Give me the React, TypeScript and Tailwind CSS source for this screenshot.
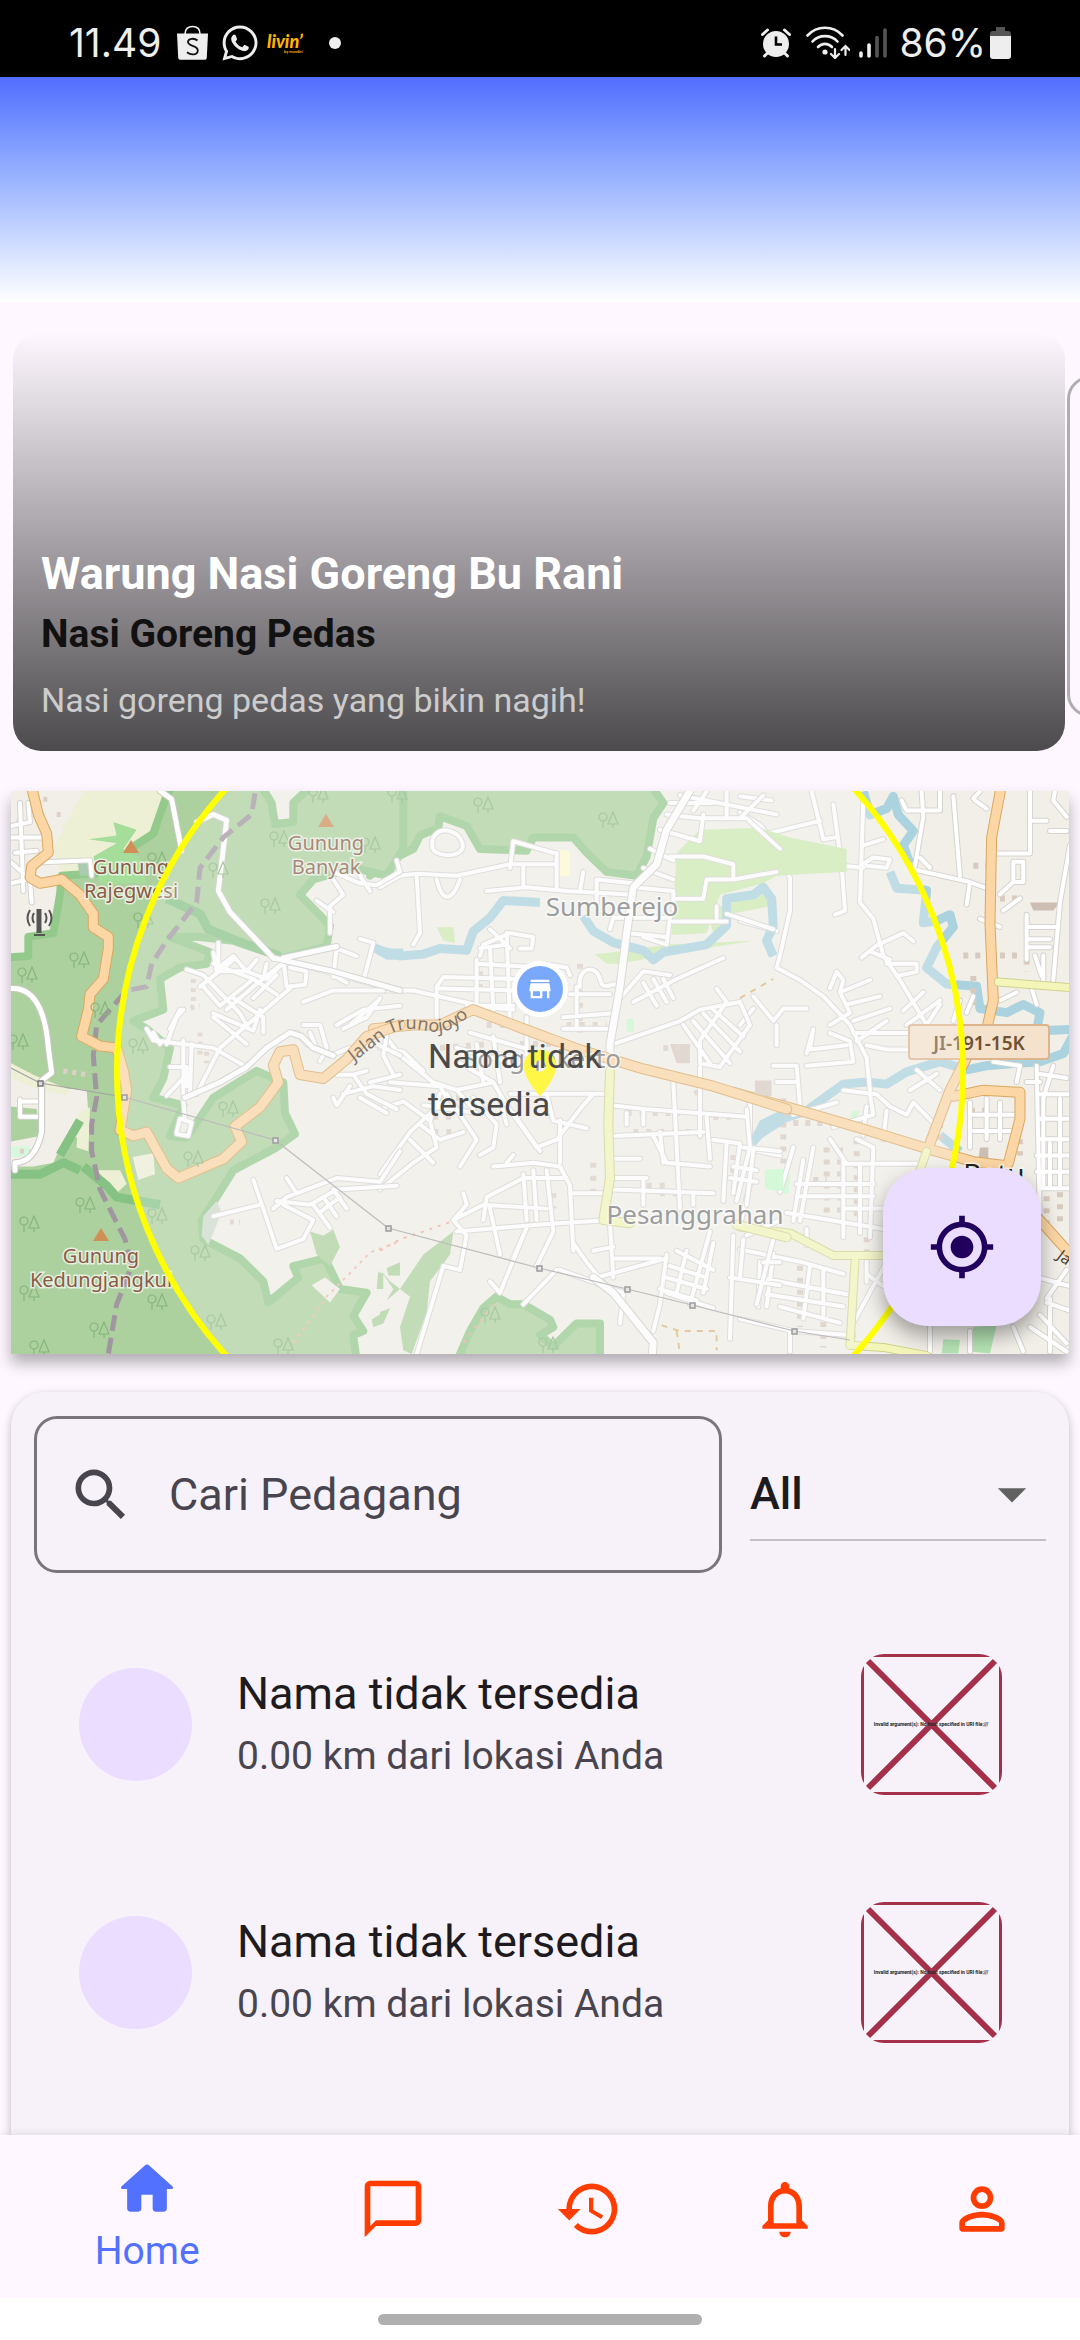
import type { ReactNode } from "react";
import {
  MdArrowDropDown,
  MdChatBubbleOutline,
  MdHistory,
  MdLocationOn,
  MdMyLocation,
  MdNotificationsNone,
  MdSearch,
  MdStore,
} from "react-icons/md";
import { FaWhatsapp } from "react-icons/fa";

/* ---------- Status bar ---------- */

function ShopIcon() {
  return (
    <svg viewBox="0 0 31 35" className="h-[35px] w-[31px]" aria-hidden="true">
      <path d="M8 9C8 4 11 1.500 15.500 1.500S23 4 23 9" fill="none" stroke="#eeeeee" strokeWidth="1.600" />
      <path d="M0 8.500h31l-1.200 24c-.1 1.500-1 2.300-2.400 2.300H3.600c-1.400 0-2.300-.8-2.400-2.300z" fill="#eeeeee" />
      <path
        d="M20.500 15.500c-3-2.600-9.500-2.400-9.500 1.500 0 4.600 9.800 3 9.800 8.400 0 4.600-6.800 5.200-10.800 1.800"
        fill="none"
        stroke="#111"
        strokeWidth="1.800"
      />
    </svg>
  );
}

function LivinIcon() {
  return (
    <svg viewBox="0 0 40 24" className="h-6 w-10" fill="#ffb400" aria-hidden="true">
      <text x="0" y="17" fontFamily="Lato, sans-serif" fontStyle="italic" fontWeight="900" fontSize="18">
        livin’
      </text>
      <text x="17" y="22" fontFamily="Lato, sans-serif" fontWeight="700" fontSize="4">
        by mandiri
      </text>
    </svg>
  );
}

function AlarmIcon() {
  return (
    <svg viewBox="0 0 30 30" className="size-[30px]" aria-hidden="true">
      <circle cx="15" cy="16" r="13" fill="#eeeeee" />
      <path d="M1.500 6.500 6.500 2M28.500 6.500 23.500 2M3.500 28l4-4M26.500 28l-4-4" stroke="#eeeeee" strokeWidth="3" strokeLinecap="round" />
      <path d="M15 8.500v8h6" fill="none" stroke="#000" strokeWidth="2.600" />
    </svg>
  );
}

function WifiIcon() {
  return (
    <svg viewBox="0 0 44 33" className="h-[33px] w-11" fill="none" stroke="#eeeeee" strokeWidth="2.600" strokeLinecap="round" aria-hidden="true">
      <path d="M1.500 9.500C11-.8 27-.8 36.500 9.500" />
      <path d="M6.500 15.500C13 8.300 25 8.300 31.500 15.500" />
      <path d="M12 21c4-4.200 10-4.200 14 0" />
      <circle cx="19" cy="26" r="1.300" fill="#eeeeee" />
      <path d="M29 23v9m-4-4 4 4 4-4" strokeWidth="2.200" />
      <path d="M39.500 29v-9m-4 4 4-4 4 4" strokeWidth="2.200" />
    </svg>
  );
}

function SignalIcon() {
  return (
    <svg viewBox="0 0 28 30" className="h-[30px] w-7" strokeWidth="3.600" strokeLinecap="round" aria-hidden="true">
      <path d="M2 25v3M10 17v11" stroke="#eeeeee" />
      <path d="M18 9.500V28M26 2v26" stroke="#555" />
    </svg>
  );
}

function BatteryIcon() {
  return (
    <svg viewBox="0 0 21 32" className="h-8 w-[21px]" aria-hidden="true">
      <path d="M6 0h9v4h3c2 0 3 1 3 3v3H0V7c0-2 1-3 3-3h3z" fill="#555" />
      <path d="M0 9h21v20c0 2-1 3-3 3H3c-2 0-3-1-3-3z" fill="#eeeeee" />
    </svg>
  );
}

function StatusBar() {
  return (
    <div className="flex h-[77px] items-center justify-between bg-black pt-2 pr-[69px] pl-[69px] font-[Inter,sans-serif] text-[39px] leading-none text-[#eeeeee]">
      <div className="flex items-center">
        <span>11.49</span>
        <div className="ml-4 flex items-center gap-3">
          <ShopIcon />
          <FaWhatsapp className="size-10" />
        </div>
        <div className="ml-[7px]">
          <LivinIcon />
        </div>
        <span className="ml-[22px] size-3 rounded-full bg-[#eeeeee]" />
      </div>
      <div className="flex items-center">
        <AlarmIcon />
        <div className="ml-[15px]">
          <WifiIcon />
        </div>
        <div className="ml-[9px]">
          <SignalIcon />
        </div>
        <span className="mr-1 ml-3">86%</span>
        <BatteryIcon />
      </div>
    </div>
  );
}

/* ---------- Promotions ---------- */

function PromoCarousel() {
  return (
    <section className="flex gap-[2px] overflow-hidden pt-[30px] pl-[13px]">
      <article className="flex min-h-[419px] w-[calc(100%-15px)] shrink-0 flex-col justify-end rounded-[28px] bg-linear-to-b from-transparent to-black/70 px-7 pb-[27px] font-[Roboto,sans-serif]">
        <h2 className="text-[45px] leading-[64px] font-bold text-white">Warung Nasi Goreng Bu Rani</h2>
        <h3 className="text-[39px] leading-[56px] font-bold text-[#111111]">Nasi Goreng Pedas</h3>
        <p className="mt-[14px] text-[34px] leading-[48px] text-[#cccccc]">Nasi goreng pedas yang bikin nagih!</p>
      </article>
      <article className="mt-11 mb-[34px] w-[calc(100%-28px)] shrink-0 rounded-[23px] border-[3px] border-[#b0adb1]" />
    </section>
  );
}

/* ---------- Map ---------- */

type RoadProps = { lines: string[]; width: number; fill: string; casing: string };

function Roads({ lines, width, fill, casing }: RoadProps) {
  const shared = { vectorEffect: "non-scaling-stroke", fill: "none", strokeLinejoin: "round", strokeLinecap: "round" } as const;
  return (
    <>
      {lines.map((d) => (
        <path key={d} d={d} stroke={casing} strokeWidth={width + 2} {...shared} />
      ))}
      {lines.map((d) => (
        <path key={d} d={d} stroke={fill} strokeWidth={width} {...shared} />
      ))}
    </>
  );
}

function Line({ d, stroke, width, dash }: { d: string; stroke: string; width: number; dash?: string }) {
  return (
    <path d={d} fill="none" stroke={stroke} strokeWidth={width} strokeDasharray={dash} strokeLinejoin="round" vectorEffect="non-scaling-stroke" />
  );
}

function Wood({ d }: { d: string }) {
  return <path d={d} fill="#add19e" stroke="#94c98c" strokeWidth="8" strokeLinejoin="round" vectorEffect="non-scaling-stroke" />;
}

const MINOR = { width: 4, fill: "#ffffff", casing: "#d6d4d1" };
const MAIN = { width: 9, fill: "#fcd6a4", casing: "#d9a860" };

const trees = [
  [279, 839], [218, 870], [270, 906], [143, 920], [79, 960], [27, 975], [138, 1046], [18, 1042], [228, 1109], [85, 1205],
  [29, 1224], [157, 1216], [200, 1253], [29, 1293], [157, 1302], [99, 1330], [216, 1322], [283, 1346], [39, 1348],
  [193, 1159], [157, 860], [397, 795], [483, 805], [608, 820], [370, 845], [548, 1345], [318, 795], [490, 1315], [100, 1010],
];

const peaks = [[131, 846], [326, 820], [101, 1234]];
const pylons = [[40, 1083], [124, 1097], [275, 1140], [388, 1228], [539, 1268], [627, 1289], [692, 1305], [794, 1331]];

function WestTile() {
  return (
    <g transform="translate(0 780) scale(.3333 .3827)">
      <path d="M170 28H510L460 150 390 190 260 250 185 250 160 180 190 130Z" fill="#eef0d5" />
      <path d="M110 28H250L200 110 150 130Z" fill="#f2efe9" />
      <Wood d="M500 40 460 140 390 180 360 240 185 250 180 300 160 400 85 410 85 460 0 465 0 1520H1070L1060 1450 1090 1440 1060 1400 1100 1340 1020 1330 975 1250 880 1270 895 1300 805 1365 790 1310 720 1250 610 1200 605 1150 650 1090 700 1020 830 960 885 925 855 870 850 790 770 760 640 830 560 935 510 930 550 850 460 830 490 780 510 700 440 650 400 630 490 600 480 520 540 490 620 480 630 450 510 410 600 410 700 420 850 465 980 435 990 380 900 300 940 260 1060 230 1160 250 1210 180V10H940L880 60 880 110 825 115 815 60 780 10H520Z" />
      <path d="M265 155 350 145 340 110 410 130 370 180 415 200 440 270 300 270 280 200 350 165Z" fill="#a5dd9b" />
      <path d="M232 215 275 205 272 250 240 250Z" fill="#aacbaf" />
      <path d="M0 745 90 765 100 800 260 810 265 870 235 930 180 960 160 1000 100 1010 0 1010Z" fill="#f2efe9" />
      <path d="M0 725 100 770 210 810 200 825 90 800 0 765Z" fill="#eef0d5" />
      <path d="M0 850 110 860 120 930 0 950Z" fill="#add19e" />
      <path d="M0 960 85 955 88 985 0 985Z" fill="#d6f8dc" />
      <path d="M235 870 270 855 265 970 230 960Z" fill="#eef0d5" />
      <path d="M290 1020 360 1020 380 1055 350 1080Z M398 985 460 975 465 1030 415 1045Z" fill="#eef0d5" />
      <path d="M935 1320 975 1300 1020 1330 990 1365Z" fill="#f2efe9" />
      <path d="M930 1180 970 1190 1000 1175 1020 1220 990 1270 950 1240Z M1135 1285 1150 1290 1150 1330 1130 1330Z M1115 1410 1170 1380 1150 1420 1120 1430Z M1160 1275 1200 1260V1295H1165Z" fill="#add19e" />
      <path d="M610 1140 650 1100 665 1130 625 1215 605 1190Z" fill="#cfdccb" />
      <Line d="M180 980 240 890M250 1010 320 1060 350 1090 480 1110M500 310 600 350 625 390 740 430 840 460M33 1030 120 1030 190 1000 240 1020" stroke="#86c284" width={9} />
      <Line d="M130 50h18M170 90h24M50 110h26M190 760 260 770M580 520v60M600 660v70M545 600 600 590M620 710v30M690 1155h30M60 970h30" stroke="#ddd0c6" width={5} dash="4 5" />
      <path d="M1112 420 1160 440H1210V470H1160L1120 450Z" fill="#aad3df" />
      <Roads
        {...MINOR}
        lines={[
          "M33 120 90 110 85 60M33 150H130M45 190 110 185M33 215 90 260 95 320M33 270 80 260M60 60 70 290M130 215 270 210 275 250",
          "M560 495 610 510 720 610 740 640M600 540 700 470M640 480 760 520 830 560M640 450 650 500 730 500M655 425V490L700 460 740 500 800 520 860 470M680 600 760 540 860 470",
          "M640 610 760 655 780 600M740 690 640 620M440 650 460 680 640 700 740 750M460 660 480 690M540 600 510 650M500 690 530 620 550 600M550 680V820M510 750H560L560 800M500 825 560 770M575 690 570 820",
          "M700 570 790 620V660M800 480 790 520M850 470 860 540 915 535 920 500 870 490M830 510 760 570M770 470 740 500M610 540 660 590 760 520M590 820 660 700 870 545",
          "M1000 515 1010 440 1070 460M1120 425 1090 525M1080 415 1120 425M890 480 1190 550M1000 510 1040 530M910 580 1000 550H1150M1010 640 1090 600 1200 590M1030 650 1100 620 1140 570M1050 640 1130 580",
          "M1000 240 1080 270 1130 275 1200 240M1000 260 1030 300 990 330 990 400M950 315 1000 345M1080 250 1110 290M1190 210 1200 240",
          "M890 660 920 690 990 720 1050 700M910 640 960 640 980 700M960 735 980 700M930 660 945 690",
          "M1010 770 1060 770 1100 820 1190 860M1050 800 1010 850 1000 830M1030 820 1120 800 1200 810M1060 770 1100 760M1130 690 1200 720M1160 670 1150 720 1180 770M1080 830 1160 870M1200 770 1110 790",
          "M820 1120 860 1090 1010 1040 1140 1050 1200 970M830 1100 930 1110 1010 1070 1190 1060M940 1110 990 1170M970 1090 1010 1140M1000 1070 1040 1120M1020 1090 960 1130M850 1110 940 1150 910 1200 830 1225 790 1120 760 1045M860 1040 890 1080M640 1140 780 1110",
          "M550 835 555 890M530 920 540 885 575 895 565 930 530 925M60 840H125M60 880H120M60 835 60 880",
        ]}
      />
      <Roads
        lines={["M480 28 515 50 545 185", "M590 110 640 90 680 105 670 180 655 290 690 345 820 465", "M33 545C120 540 140 640 145 700L155 765 125 785 125 920C110 980 80 1000 45 1000V1020", "M555 830 660 790 740 750 800 700 870 660 905 670 940 700 1000 720", "M820 465 1000 500 1200 550M850 465 1010 435"]}
        width={5}
        fill="#ffffff"
        casing="#c9c8c4"
      />
      <Line d="M765 35 755 90 670 150 600 230 590 320 500 420 455 480 440 540 380 550 290 640 280 720 290 830 275 900 275 970 300 1070 375 1200 395 1270 350 1370 325 1500" stroke="#a096a0" width={5} dash="16 7" />
      <Roads {...MAIN} lines={["M95 20 115 90 140 140 145 190 95 225 90 255 120 270 185 260 240 300 280 350 280 385 325 410 325 440 310 520 270 560 265 600 245 670 300 695 350 700 370 760 380 810 360 915 400 930 440 920 500 1015 535 1040 670 990 725 945 705 905 780 855 835 790 820 745 840 710 880 705 900 770 970 780 1040 730 1100 670 1200 640"]} />
      <Line d="M880 1470 940 1400 980 1350 1060 1280 1110 1235 1200 1205" stroke="#f3b8a8" width={2} dash="3 5" />
    </g>
  );
}

function CentralTile() {
  return (
    <g transform="translate(380 780) scale(.3333 .3827)">
      <path d="M890 190 960 130 1140 125 1230 150 1400 180V240L1190 250 1150 270 1020 300 980 400 875 405Z" fill="#cdebb0" />
      <path d="M980 340 1060 320 1150 290 1170 330 1050 350 1000 400Z" fill="#cdebb0" />
      <path d="M645 455 700 450 870 430 1120 420 900 450 720 480 680 480Z M170 385 220 385 225 425 190 420Z" fill="#cdebb0" />
      <Wood d="M-30 250 20 215 100 180 120 145 175 125 180 95 260 120 300 180 440 185 460 150 580 150 620 190 680 240 770 250 800 200 820 100 850 60 810 10H-30Z" />
      <Wood d="M230 1520 270 1440 310 1380 350 1350 390 1370 430 1370 510 1410 520 1430 480 1450 520 1480 590 1420 660 1420V1520Z" />
      <path d="M0 1280 40 1330 20 1360 60 1330 130 1240 220 1180 210 1240 150 1310 140 1390 95 1500 70 1490 60 1430 90 1350 30 1310ZM0 1390 30 1380 0 1425Z" fill="#add19e" />
      <path d="M525 180 570 185V250H535Z" fill="#fffccf" />
      <path d="M1155 1020 1210 1015V1075L1155 1060ZM740 625h22v32h-22Z" fill="#c8facc" />
      <path d="M1125 785h50v40h-50ZM870 690h60v50h-40Z" fill="#d9ccc3" />
      <Line d="M0 445 60 460 130 455 180 440 260 445 280 395 330 360 370 315 480 320M610 355 640 395 700 425 790 445 820 470 850 450 980 430 1040 380 1040 310 1120 300 1150 280 1175 310 1180 380 1160 420 1180 460" stroke="#aad3df" width={9} />
      <path d="M1110 940 1140 890 1210 860V900L1110 955Z" fill="#aad3df" />
      <Line d="M300 500V560M320 640H400M420 690H560M150 830H260M120 880H260M160 920H240M600 480V660M740 870H900M760 920H950M800 1060H860M640 1000V1100M560 640H680M850 700H920M930 780 960 830M180 700 330 690M840 1080H900M1000 880H1080M1060 980V1040M520 1080V1120" stroke="#dccfc5" width={6} dash="5 8" />
      <Roads
        {...MINOR}
        lines={[
          "M0 280 60 250 110 245 230 250 390 220 530 220M110 250 120 400 100 430M45 200 55 250M320 290 440 280 560 290 760 300M390 230 400 160 480 180 520 190M430 220V280M530 190V280M610 240 600 290M650 260V320M650 260 760 270M160 150C180 120 230 130 245 160S220 200 190 195 150 180 160 150M170 260C190 330 220 310 240 260",
          "M810 180 880 210M790 230 880 260M840 130 960 160 970 90M860 90 960 100 1100 100 1200 180M870 200 970 200 1060 220 1060 250M760 280 880 290 880 340M890 310 970 310 980 260 1060 260 1190 240M870 60 1000 60M900 40 1190 90M940 80 980 30M1040 30V95M1080 100 1150 40",
          "M870 360 860 430 790 410M690 390 700 360H860M740 400 860 410M880 370 1040 370M1040 350 1180 390M1010 330V360",
          "M0 550 100 550 300 590 400 590M170 540V620M170 540 190 515 430 520M180 545 430 550M300 460 310 430 390 400 460 410 455 440 420 440M290 480 480 490M290 470V600M330 440 340 600M380 400 390 640M330 390 390 440M300 440 380 430M260 590 400 600",
          "M570 560 690 560M590 540V650M550 620 690 610M550 650H680M490 480 560 490 570 510M600 540C590 490 650 480 660 520S700 520 720 540M720 570 790 500 870 510M760 580 890 520 1030 465M790 530 830 590M820 520 860 580M850 520 880 570M700 690 900 630 960 600 1080 580 1110 640 1020 750 960 740 960 680 1040 580M910 640 990 740M940 630 1050 740M970 610 1080 710M1000 600 1090 670M1010 545 1040 580",
          "M0 650 60 720 160 790 230 810 340 790M0 700 70 710 130 760M30 790 180 800 200 830 90 920 0 1030M0 860 70 840 150 890 170 960 100 1000 0 1070M120 900 180 940 250 920M90 940 160 1000M180 820 150 890M200 820 290 940 240 1010M230 810 280 860M130 850 290 870M280 830 350 900 340 960 300 980",
          "M340 670 360 790M270 660 430 700M230 700 400 740M440 620V720M290 690 310 790M240 740 340 790 380 850 470 960 530 940 600 860 640 820M390 820 680 820M400 870 480 970M360 830 380 900M500 820 520 890 620 910",
          "M340 1010 460 1000 540 1010 570 1060 580 1230M540 890V1000M460 1020 470 1150M380 1000 400 980M310 1150 320 1090 430 1040 560 1040M430 1030 440 1150M230 1180 500 1160 690 1150M220 1150 310 1110 500 1120M250 1080 260 1110 220 1150 260 1190 240 1280M330 1120 360 1240M500 1020 520 1180 470 1270M570 1080 690 1080M400 1250 440 1170",
          "M690 850 800 860 1100 880M700 930 970 920M740 870V900M790 860V900M700 990H780M700 1040H800M700 1070 1000 1080M880 790 900 1120M960 750V930M1100 860 1110 960 1070 1100M820 930 860 1000 990 1010M840 920 850 1000M980 880 990 990M790 1040V1110M1000 940 1080 950 1060 1080M1040 950 1030 1100M1090 960 1200 970M1120 970 1100 1110M940 1080V1110M1060 1010 1130 1020M1050 1040 1130 1050",
          "M700 1250 840 1250M580 1210 620 1260 800 1450M640 1230 700 1220M690 1160 700 1300M730 1340 720 1420M650 1300 860 1250M860 1240 840 1370 820 1440M870 1270 980 1300M860 1300 980 1330M840 1330 950 1360M890 1230 1000 1280M920 1230 890 1340M990 1180 930 1370M1000 1210 970 1340M860 1340 1000 1380M1060 1190 1050 1460M1090 1200 1080 1300M1180 1200 1130 1370M1050 1300 1200 1320M1150 1260H1200M110 1500 190 1270 240 1280M330 1310 360 1340 430 1190M430 1370 530 1280M540 1280 730 1340M1200 1150 1100 1190",
        ]}
      />
      <Roads width={7} fill="#ffffff" casing="#cfcdc9" lines={["M930 28 860 130 830 220 760 280 740 400 720 540 690 690 690 740", "M640 1300 700 1340 820 1470 815 1520"]} />
      <Roads {...MAIN} lines={["M-20 650 100 640 180 640 280 600 430 650 600 705 790 755 1000 800 1220 860"]} />
      <Roads width={8} fill="#f3f6b8" casing="#cfd18c" lines={["M690 760 685 900 690 1040 670 1150 750 1158", "M1070 1162 1220 1195"]} />
      <Line d="M0 1230 60 1200 130 1180 210 1155M250 1470 340 1370" stroke="#f3a99a" width={2} dash="3 6" />
      <Line d="M845 1425 900 1440 1010 1440 1010 1490M890 1440 900 1500M1080 570 1180 520" stroke="#dcb77c" width={2} dash="6 6" />
    </g>
  );
}

function EastTile() {
  return (
    <g transform="translate(740 780) scale(.3333 .4082)">
      <Line d="M370 28 390 85 440 70 460 40 475 85 520 125 490 160 510 205M450 225 470 265 560 270 550 350 590 345 630 330 640 360 590 410 560 460 620 500 710 505 720 560 800 570 850 550 900 570 890 615 1010 610 970 670 900 690 740 700 680 710 600 690 500 715 440 745 380 740 310 745 200 810 90 840 35 890M600 870 660 910" stroke="#aad3df" width={9} />
      <path d="M75 955 150 955 145 1015 75 1000ZM340 810 360 810 350 830 330 825Z" fill="#c8facc" />
      <path d="M690 1400 700 1340 770 1335 750 1405Z M610 1370 660 1372 655 1405H605Z" fill="#b5e3b5" />
      <path d="M870 300 960 300 940 320 880 320ZM720 900H745V930H715ZM45 740H90V775H45Z" fill="#cdbeb4" />
      <Line d="M130 780V950M160 840H380M260 900V1080M300 900V1100M350 880V1070M220 980H260M780 290H850M780 430H860M670 430H740M700 480V560M860 440V470M700 210H740M920 1020V1090M960 1010V1090M180 1190V1340M250 1210V1390M380 1120V1200M600 840V900M840 880V920M690 810H760" stroke="#d8cabf" width={6} dash="5 7" />
      <Roads
        {...MINOR}
        lines={[
          "M215 28 250 145 290 140M240 100 90 130M0 40 95 50M0 80 60 110 110 160 150 240 150 320 120 430 110 460 180 490 250 530 330 600 380 680 390 760M280 60 305 210 315 320 285 330M305 210 370 215M370 50 360 300 400 340 430 430 480 490 560 600M370 160 430 145M370 205 400 190 450 195 440 215 380 210",
          "M485 50 500 75H600M545 30 550 90 525 210M640 40 660 235M600 28 600 70M705 50 740 70M525 220 690 250 740 265M690 250 680 305M770 180H870V28M870 100H920M930 125H980M980 90 940 50 945 28M990 160 960 300 940 490M860 330V440M860 390H930M860 360H950M860 410H930M700 45 720 28M820 200H850V250H820ZM780 280 820 250M840 290 790 320M720 340 780 360",
          "M365 435 410 405 490 375 520 395M390 420 450 440M440 450 530 450 530 470 470 480M490 565 550 520M500 600 600 540M560 600 600 550M270 510 290 470 310 490 300 520 390 490M300 520 330 570 270 600M320 550 420 530M340 590 450 560M340 620 520 620M380 650 440 660 530 660M350 640 440 590M40 530 100 590 130 560 200 560M110 600 110 650M200 670 220 610 210 660 320 650M330 640 270 620M180 800 170 700 100 700M110 740H170M330 640 340 690 200 700",
          "M310 760 410 770 450 800 500 820M390 770 400 820 280 850M380 800 370 870M160 820 290 790M500 820 520 790 580 840M530 710 600 760M510 760 590 720M440 810 430 880M30 780V890M0 900 120 920M160 900 120 1010M30 990 0 1090M160 1080 190 930M220 900 180 1080M270 880 320 940H540M310 930V1120M350 880 400 900 390 1120M170 990H400M170 1020H400M310 1050H430M140 1060 430 1100M200 1100 200 1140M360 940 360 1110",
          "M690 790 690 900M740 780V880M780 790V880M700 820H830M700 860H820M890 700 900 1090M940 700 910 780 910 1000M860 740H900M900 720 980 730M900 770H1000M900 830H1000M900 880H990M890 920H1000M890 960H1000M930 890V1000M960 780V1000M760 690 840 700 830 740M900 1000H1000M980 1200 920 1270M900 1220 990 1240M920 1280 990 1300M900 1310 980 1380M930 1270V1400",
          "M0 1150 180 1180 310 1210M60 1220 320 1260M60 1180 55 1290M80 1260 310 1290M100 1160 80 1290M210 1190 190 1320M250 1200 250 1310M120 1290 300 1330M0 1320 160 1350 340 1360M150 1350V1400M340 1330 440 1180M380 1210 430 1240M380 1180V1230M570 1340V1400M690 1350V1400M820 1340 850 1400M870 1340 980 1400",
          "M875 510 890 550M885 430 905 480M910 430V500M780 540 830 520M540 190 570 215M0 600 40 560M640 590 660 540M680 570 700 530M0 345 110 370",
        ]}
      />
      <Roads {...MAIN} lines={["M785 10 755 140 750 350 760 540 740 610 680 680 630 760 570 890", "M640 775 730 760 840 765 840 830 805 940", "M-20 765 180 810 370 855 570 905 700 935 800 945", "M890 1070 1000 1170"]} />
      <Roads width={7} fill="#f3f6b8" casing="#cfd18c" lines={["M775 495 1010 510", "M0 1095 150 1110 280 1165H440", "M345 1180 330 1385 430 1390 560 1410", "M560 910 530 980"]} />
    </g>
  );
}

function MapLabel({ x, y, size, fill, children }: { x: number; y: number; size: number; fill: string; children: ReactNode }) {
  return (
    <text x={x} y={y} fontSize={size} fill={fill} textAnchor="middle" stroke="#ffffff" strokeOpacity=".7" strokeWidth="3" paintOrder="stroke">
      {children}
    </text>
  );
}

function MapDrawing() {
  return (
    <svg viewBox="11 791 1058 563" preserveAspectRatio="xMidYMid slice" className="block h-[563px] w-full" fontFamily="Noto Sans, sans-serif" role="img" aria-label="Peta lokasi pedagang">
      <path d="M0 780h1080v590H0z" fill="#f2efe9" />
      <EastTile />
      <CentralTile />
      <WestTile />
      {trees.map(([x, y]) => (
        <g key={`${x}-${y}`} transform={`translate(${x} ${y})`} fill="none" stroke="#86b57c" strokeWidth="1.200">
          <circle cx="-5" cy="-3" r="4" />
          <path d="M-5 1v7M5 4v4M5-8 0 4h10z" />
        </g>
      ))}
      <path d="M11 1068 40 1083 124 1097 275 1140 388 1228 539 1268 627 1289 692 1305 794 1331 850 1340" fill="none" stroke="#a3a3a3" strokeWidth="1.200" />
      {pylons.map(([x, y]) => (
        <path key={x} d={`M${x - 2} ${y - 2}h5v5h-5z`} fill="#ddd" stroke="#777" strokeWidth="1.500" />
      ))}
      {peaks.map(([x, y]) => (
        <path key={x} d={`M${x} ${y - 6}l8 13h-16z`} fill="#d08f55" />
      ))}
      <g fill="none" stroke="#555" strokeWidth="2">
        <path d="M39 909v24" strokeWidth="5" />
        <path d="M34 935h11M34 913q-3 5 0 10M30 910q-5 8 0 16M45 913q3 5 0 10M49 910q5 8 0 16" />
      </g>
      <g>
        <MapLabel x={131} y={874} size={20} fill="#8a5a44">Gunung</MapLabel>
        <MapLabel x={131} y={898} size={20} fill="#8a5a44">Rajegwesi</MapLabel>
        <MapLabel x={326} y={850} size={20} fill="#8a5a44">Gunung</MapLabel>
        <MapLabel x={326} y={874} size={20} fill="#8a5a44">Banyak</MapLabel>
        <MapLabel x={101} y={1263} size={20} fill="#8a5a44">Gunung</MapLabel>
        <MapLabel x={101} y={1287} size={20} fill="#8a5a44">Kedungjangkul</MapLabel>
        <MapLabel x={612} y={916} size={26} fill="#777">Sumberejo</MapLabel>
        <MapLabel x={542} y={1068} size={26} fill="#777">Songgokerto</MapLabel>
        <MapLabel x={695} y={1224} size={26} fill="#777">Pesanggrahan</MapLabel>
        <MapLabel x={994} y={1184} size={28} fill="#222">Batu</MapLabel>
      </g>
      <path id="street-name" d="M354 1062 390 1034Q404 1026 428 1031T470 1014" fill="none" />
      <text fontSize="18" fill="#4f4030">
        <textPath href="#street-name">Jalan Trunojoyo</textPath>
      </text>
      <text x="1056" y="1258" fontSize="16" fill="#4f4030" transform="rotate(36 1056 1258)">Ja</text>
      <rect x="909" y="1025" width="140" height="34" rx="3" fill="#f5e2cd" stroke="#ddb48c" strokeWidth="2" />
      <text x="979" y="1050" fontSize="19" fontWeight="600" textAnchor="middle" fill="#6d5233">JI-191-15K</text>
      <circle cx="540" cy="1072" r="423" fill="#f4f6f4" fillOpacity=".3" stroke="#ffff00" strokeWidth="6" />
    </svg>
  );
}

function MapCard() {
  return (
    <section className="relative mx-[11px] mt-10 shadow-[0_9px_14px_rgba(0,0,0,0.3)]">
      <div className="overflow-hidden">
        <MapDrawing />
      </div>
      <div className="absolute top-[170px] left-1/2 flex size-14 -translate-x-1/2 items-center justify-center rounded-full border-[5px] border-white bg-[#7aa9fc]">
        <MdStore className="size-7 text-white" />
      </div>
      <MdLocationOn className="absolute top-[254px] left-1/2 size-14 -translate-x-1/2 text-[#fff645]" />
      <p className="absolute top-[241px] left-1/2 w-[224px] -translate-x-1/2 font-[Roboto,sans-serif] text-[34px] leading-[48px] text-[#4a4a4a]">
        Nama tidak tersedia
      </p>
      <button
        type="button"
        aria-label="Lokasi saya"
        className="absolute right-7 bottom-7 flex size-[158px] items-center justify-center rounded-[45px] bg-[#eaddff] text-[#21005d] shadow-[0_10px_20px_rgba(0,0,0,0.35)]"
      >
        <MdMyLocation className="size-[68px]" />
      </button>
    </section>
  );
}

/* ---------- Vendor list ---------- */

function BrokenImage() {
  return (
    <svg viewBox="0 0 141 141" className="size-[141px] shrink-0 rounded-[23px]" role="img" aria-label="Gambar tidak tersedia">
      <path d="M1.500 1.500h138v138h-138z" fill="none" stroke="#a4304a" strokeWidth="3" />
      <path d="M7 7l127 127M134 7 7 134" stroke="#a4304a" strokeWidth="6" />
      <text x="70" y="72" fontSize="5" fontWeight="700" fontFamily="Roboto, sans-serif" textAnchor="middle" fill="#222">
        Invalid argument(s): No host specified in URI file:///
      </text>
    </svg>
  );
}

const vendors = [
  { id: 1, name: "Nama tidak tersedia", distance: "0.00 km dari lokasi Anda" },
  { id: 2, name: "Nama tidak tersedia", distance: "0.00 km dari lokasi Anda" },
];

function VendorPanel() {
  return (
    <section className="mx-[11px] mt-[38px] flex-1 rounded-t-[34px] bg-[#f7f2fa] px-[23px] pt-6 pb-[38px] font-[Roboto,sans-serif] shadow-[0_3px_8px_rgba(0,0,0,0.25)]">
      <div className="flex items-start gap-7">
        <label className="flex h-[157px] min-w-0 flex-1 items-center rounded-[23px] border-[3px] border-[#79747e] pr-6 pl-[30px] text-[#49454f]">
          <MdSearch className="size-[68px] shrink-0" />
          <input
            type="search"
            aria-label="Cari Pedagang"
            placeholder="Cari Pedagang"
            className="ml-[34px] w-full min-w-0 bg-transparent text-[45px] outline-none placeholder:text-[#49454f]"
          />
        </label>
        <div className="relative mt-[17px] w-[296px] shrink-0 border-b-2 border-[#c3bfc6]">
          <select aria-label="Kategori" defaultValue="All" className="h-[106px] w-full appearance-none bg-transparent pt-4 text-[45px] font-medium text-[#1d1b20] outline-none">
            <option>All</option>
          </select>
          <MdArrowDropDown className="pointer-events-none absolute top-[27px] right-0 size-[68px] text-[#616161]" />
        </div>
      </div>
      <ul className="mt-[27px]">
        {vendors.map((vendor) => (
          <li key={vendor.id} className="flex h-[248px] items-center pr-11 pl-[45px]">
            <span className="size-[113px] shrink-0 rounded-full bg-[#eaddff]" />
            <div className="ml-[45px] min-w-0 flex-1">
              <p className="text-[45px] leading-[64px] text-[#1d1b20]">{vendor.name}</p>
              <p className="text-[39px] leading-[60px] text-[#49454f]">{vendor.distance}</p>
            </div>
            <BrokenImage />
          </li>
        ))}
      </ul>
    </section>
  );
}

/* ---------- Bottom navigation ---------- */

function HomeIcon() {
  return (
    <svg viewBox="0 0 24 24" className="size-[68px]" fill="currentColor" aria-hidden="true">
      <path d="M10 19v-5h4v5c0 .55.45 1 1 1h3c.55 0 1-.45 1-1v-7h1.700c.46 0 .68-.57.33-.87L12.670 3.600c-.38-.34-.96-.34-1.340 0l-8.360 7.530c-.34.3-.13.87.33.87H5v7c0 .55.45 1 1 1h3c.55 0 1-.45 1-1z" />
    </svg>
  );
}

function PersonIcon() {
  return (
    <svg viewBox="0 0 24 24" className="size-[68px]" fill="currentColor" fillRule="evenodd" aria-hidden="true">
      <path d="M12 6a2 2 0 1 1 0 4 2 2 0 0 1 0-4zm0-2a4 4 0 1 0 0 8 4 4 0 0 0 0-8z" />
      <path d="M12 15c2.700 0 5.800 1.290 6 2v1H6v-.99c.2-.72 3.300-2.010 6-2.010zm0-2c-2.670 0-8 1.340-8 4v2c0 .55.45 1 1 1h14c.55 0 1-.45 1-1v-2c0-2.660-5.330-4-8-4z" />
    </svg>
  );
}

const tabs: { label: string; icon: ReactNode }[] = [
  { label: "Pesan", icon: <MdChatBubbleOutline className="size-[68px]" /> },
  { label: "Riwayat", icon: <MdHistory className="size-[68px]" /> },
  { label: "Notifikasi", icon: <MdNotificationsNone className="size-[68px]" /> },
  { label: "Profil", icon: <PersonIcon /> },
];

function BottomNav() {
  return (
    <footer className="sticky bottom-0 shadow-[0_-2px_8px_rgba(0,0,0,0.08)]">
      <nav className="grid h-[163px] grid-cols-[3fr_2fr_2fr_2fr_2fr] bg-[#fef7ff] font-[Roboto,sans-serif] text-[#ff3d00]">
        <a href="#home" aria-current="page" className="flex flex-col items-center pt-5 text-[#5271ff]">
          <HomeIcon />
          <span className="text-[39px] leading-[56px]">Home</span>
        </a>
        {tabs.map((tab) => (
          <a key={tab.label} href={`#${tab.label.toLowerCase()}`} aria-label={tab.label} className="flex justify-center pt-10">
            {tab.icon}
          </a>
        ))}
      </nav>
      <div className="flex h-[42px] justify-center bg-white pt-4">
        <span className="h-[11px] w-[324px] rounded-full bg-[#afafaf]" />
      </div>
    </footer>
  );
}

export default function App() {
  return (
    <div className="flex min-h-screen flex-col bg-[#fef7ff]">
      <StatusBar />
      <header className="h-[225px] bg-linear-to-b from-[#526dff] to-white" />
      <main className="flex flex-1 flex-col">
        <PromoCarousel />
        <MapCard />
        <VendorPanel />
      </main>
      <BottomNav />
    </div>
  );
}
